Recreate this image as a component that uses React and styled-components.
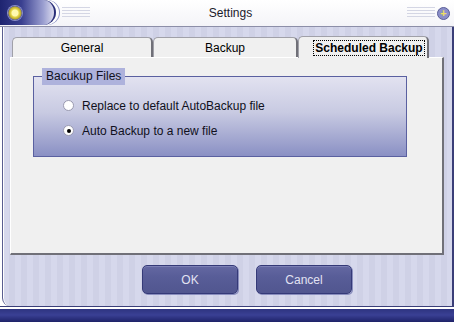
import styled, { createGlobalStyle } from "styled-components";

const Global = createGlobalStyle`
  html, body { margin: 0; padding: 0; }
  body { font-family: "Liberation Sans", Arial, sans-serif; font-size: 12px; }
`;

const Window = styled.div`
  width: 454px;
  height: 322px;
  display: flex;
  flex-direction: column;
  overflow: hidden;
  background: #fff;
`;

const TitleBar = styled.div`
  height: 26px;
  display: flex;
  align-items: center;
  background: linear-gradient(#ffffff, #f4f4f8);
  border-bottom: 1px solid #8c8ea8;
`;

const Orb = styled.div`
  width: 56px;
  height: 25px;
  margin-top: -1px;
  border-radius: 0 13px 13px 0;
  background: linear-gradient(90deg, #1e2470 0%, #3a4090 40%, #9a9ed0 80%, #dcdcef 100%);
  border-right: 2px solid #2a2f78;
  box-shadow: 3px 0 0 #fff, 4px 0 0 #9096c8;
  display: flex;
  align-items: center;
  padding-left: 8px;
  box-sizing: border-box;
`;

const Lamp = styled.div`
  width: 14px;
  height: 14px;
  border-radius: 50%;
  background: radial-gradient(circle, #fff9b0 0 3px, #e8d84a 4px, #b8a830 6px, #6a6aa0 7px);
  box-shadow: 0 0 0 1px #8a8ec8;
`;

const Stripes = styled.div`
  width: 28px;
  height: 12px;
  background: repeating-linear-gradient(#d4d6e4 0 1px, transparent 1px 3px);
  margin-left: ${(p) => p.$left || 0}px;
`;

const Title = styled.div`
  flex: 1;
  text-align: center;
  font-size: 12px;
  color: #1a1a2a;
  padding-right: 36px;
`;

const TitleButton = styled.div`
  width: 11px;
  height: 11px;
  border-radius: 50%;
  border: 1px solid #5a5e98;
  background: #8a8ec8;
  margin: 0 4px 0 2px;
  display: flex;
  align-items: center;
  justify-content: center;
  color: #f0e060;
  font-size: 11px;
  font-weight: bold;
  line-height: 1;
`;

const Body = styled.div`
  flex: 1;
  display: flex;
  flex-direction: column;
  background: repeating-linear-gradient(90deg, #d6d8ec 0 6px, #cfd1e6 6px 12px);
  border-left: 1px solid #5a5e90;
  border-right: 2px solid #3a3e78;
  margin-left: 2px;
  box-shadow: inset 1px 0 0 #fff;
  border-bottom-left-radius: 8px;
`;

const TabRow = styled.div`
  display: flex;
  align-items: flex-end;
  height: 22px;
  margin-top: 8px;
  padding-left: 9px;
`;

const Tab = styled.div`
  width: ${(p) => p.$w}px;
  height: ${(p) => (p.$active ? 22 : 20)}px;
  box-sizing: border-box;
  background: #f0f0f0;
  border: 1px solid #a0a0a8;
  border-bottom: none;
  border-right: 2px solid #707078;
  border-top-left-radius: 5px;
  border-top-right-radius: 5px;
  display: flex;
  align-items: center;
  justify-content: center;
  padding-top: 1px;
  font-weight: ${(p) => (p.$active ? "bold" : "normal")};
  color: #000;
  position: relative;
  z-index: ${(p) => (p.$active ? 2 : 1)};
  margin-bottom: ${(p) => (p.$active ? -1 : 0)}px;
`;

const Focus = styled.span`
  outline: 1px dotted #000;
  padding: 0 1px;
  margin-left: 12px;
`;

const Panel = styled.div`
  width: 434px;
  height: 198px;
  margin-left: 7px;
  box-sizing: border-box;
  background: #f0f0f0;
  border: 1px solid #ffffff;
  border-right: 2px solid #707078;
  border-bottom: 2px solid #707078;
  padding: 10px 0 0 22px;
`;

const Group = styled.fieldset`
  width: 374px;
  height: 89px;
  box-sizing: border-box;
  margin: 0;
  padding: 12px 0 0 8px;
  border: 1px solid #5a60a0;
  background: linear-gradient(#e2e2f0, #c8cae2 45%, #8a90c4);
  display: flex;
  flex-direction: column;
  gap: 8px;
`;

const Legend = styled.legend`
  background: #aeb2dc;
  padding: 1px 4px 2px;
  color: #101020;
`;

const Option = styled.label`
  display: flex;
  align-items: center;
  gap: 8px;
  height: 17px;
  margin-left: 21px;
  color: #101020;
`;

const Radio = styled.span`
  width: 11px;
  height: 11px;
  border-radius: 50%;
  background: #fff;
  border: 1px solid #9a9ab0;
  box-sizing: border-box;
  display: flex;
  align-items: center;
  justify-content: center;
  &::after {
    content: "";
    width: 4px;
    height: 4px;
    border-radius: 50%;
    background: ${(p) => (p.$on ? "#000" : "transparent")};
  }
`;

const Buttons = styled.div`
  display: flex;
  gap: 18px;
  padding-left: 139px;
  margin-top: 10px;
`;

const Button = styled.div`
  width: 96px;
  height: 29px;
  box-sizing: border-box;
  border-radius: 5px;
  background: linear-gradient(#6468a2, #585d98 40%, #51568f);
  border: 1px solid #353a78;
  box-shadow: inset 0 1px 0 #7c80b6, 1px 1px 0 #8a8ebe;
  color: #e2e2f2;
  display: flex;
  align-items: center;
  justify-content: center;
`;

const Footer = styled.div`
  height: 15px;
  border-top: 1px solid #3a3e78;
  background: linear-gradient(#fff 0 2px, #2e3480 2px, #3a4094 8px, #1e2268);
`;

export default function App() {
  return (
    <Window>
      <Global />
      <TitleBar>
        <Orb>
          <Lamp />
        </Orb>
        <Stripes $left={6} />
        <Title>Settings</Title>
        <Stripes />
        <TitleButton>+</TitleButton>
      </TitleBar>
      <Body>
        <TabRow>
          <Tab $w={141}>General</Tab>
          <Tab $w={145}>Backup</Tab>
          <Tab $w={131} $active>
            <Focus>Scheduled Backup</Focus>
          </Tab>
        </TabRow>
        <Panel>
          <Group>
            <Legend>Bacukup Files</Legend>
            <Option>
              <Radio />
              Replace to default AutoBackup file
            </Option>
            <Option>
              <Radio $on />
              Auto Backup to a new file
            </Option>
          </Group>
        </Panel>
        <Buttons>
          <Button>OK</Button>
          <Button>Cancel</Button>
        </Buttons>
      </Body>
      <Footer />
    </Window>
  );
}
